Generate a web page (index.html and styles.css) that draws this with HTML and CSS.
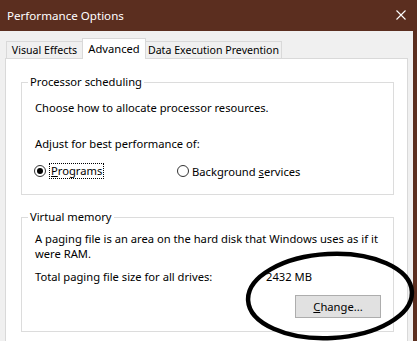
FILE: index.html
```html
<!DOCTYPE html>
<html>

<head>
    <meta charset="utf-8" />
    <title>Performance Options</title>
    <link rel="stylesheet" href="styles.css">
</head>

<body>
    <div class="titlebar">
        <span class="title">Performance Options</span>
        <svg class="close" width="10" height="10" viewBox="0 0 10 10">
            <path d="M0.5 0.5L9.5 9.5M9.5 0.5L0.5 9.5" stroke="#fff" stroke-width="1.1" />
        </svg>
    </div>
    <div class="window">
        <div class="tabs">
            <div class="tab visual">Visual Effects</div>
            <div class="tab active">Advanced</div>
            <div class="tab dep">Data Execution Prevention</div>
        </div>
        <div class="panel">
            <fieldset class="group sched">
                <legend>Processor scheduling</legend>
                <p>Choose how to allocate processor resources.</p>
                <p class="adjust">Adjust for best performance of:</p>
                <div class="radios">
                    <label class="radio">
                        <span class="dot checked"></span>
                        <span class="focus"><u>P</u>rograms</span>
                    </label>
                    <label class="radio">
                        <span class="dot"></span>
                        <span>Background <u>s</u>ervices</span>
                    </label>
                </div>
            </fieldset>
            <fieldset class="group vmem">
                <legend>Virtual memory</legend>
                <p class="desc">A paging file is an area on the hard disk that Windows uses as if it<br>were RAM.</p>
                <div class="total">
                    <span class="label">Total paging file size for all drives:</span>
                    <span>2432 MB</span>
                </div>
                <div class="actions">
                    <button><u>C</u>hange...</button>
                </div>
            </fieldset>
        </div>
    </div>
    <svg class="mark" viewBox="0 0 417 341">
        <ellipse cx="330" cy="296" rx="82" ry="42" transform="rotate(-3 330 296)" fill="none" stroke="#000" stroke-width="4.5" />
    </svg>
</body>

</html>
```

FILE: styles.css
```css
* {
    box-sizing: border-box;
    margin: 0;
    padding: 0;
}

body {
    width: 417px;
    height: 341px;
    overflow: hidden;
    position: relative;
    background: #5b2e1f;
    font-family: 'Noto Sans', 'Open Sans', sans-serif;
    font-size: 11.2px;
    color: #000;
}

.titlebar {
    height: 31px;
    display: flex;
    align-items: center;
    justify-content: space-between;
    padding: 0 11px 1px 7px;
    color: #fff;
    font-size: 11.6px;
}

.window {
    width: 413px;
    height: 310px;
    background: #f0f0f0;
    padding: 10px 5px 0 5px;
}

.tabs {
    display: flex;
    align-items: flex-end;
    padding-left: 1px;
    height: 17px;
}

.tab {
    height: 17px;
    line-height: 16px;
    font-size: 10.6px;
    text-align: center;
    border: 1px solid #d9d9d9;
    border-bottom: none;
    background: #f0f0f0;
    margin-right: -1px;
}

.tab.visual {
    width: 77px;
}

.tab.dep {
    width: 137px;
}

.tab.active {
    width: 64px;
    height: 21px;
    margin-bottom: -1px;
    background: #fff;
    position: relative;
    z-index: 1;
    line-height: 19px;
    font-size: 11.2px;
}

.panel {
    background: #fff;
    border: 1px solid #d9d9d9;
    height: 300px;
    padding: 15px 13px 0 15px;
}

.group {
    border: 1px solid #dcdcdc;
    padding: 10px 12px 15px 13px;
    line-height: 15px;
}

.group legend {
    line-height: 16px;
    padding: 0 2px;
    margin-left: -7px;
}

.adjust {
    margin-top: 21px;
}

.radios {
    display: flex;
    margin-top: 12px;
    height: 16px;
    align-items: center;
}

.radio {
    display: flex;
    align-items: center;
    width: 143px;
}

.dot {
    width: 12px;
    height: 12px;
    border: 1px solid #333;
    border-radius: 50%;
    margin: 0 3px 0 -1px;
    display: flex;
    align-items: center;
    justify-content: center;
}

.dot.checked::after {
    content: "";
    width: 6px;
    height: 6px;
    border-radius: 50%;
    background: #000;
}

.focus {
    border: 1px dotted #000;
    padding: 0 1px;
    line-height: 14px;
}

.vmem {
    margin-top: 14px;
    padding-top: 6px;
    padding-bottom: 13px;
}

.desc {
    white-space: nowrap;
}

.total {
    display: flex;
    margin-top: 8px;
}

.total .label {
    width: 231px;
}

.actions {
    display: flex;
    justify-content: flex-end;
    margin-top: 11px;
}

button {
    width: 86px;
    height: 23px;
    background: #e1e1e1;
    border: 1px solid #adadad;
    font: inherit;
    color: #000;
}

.mark {
    position: absolute;
    left: 0;
    top: 0;
    width: 417px;
    height: 341px;
    pointer-events: none;
}
```
